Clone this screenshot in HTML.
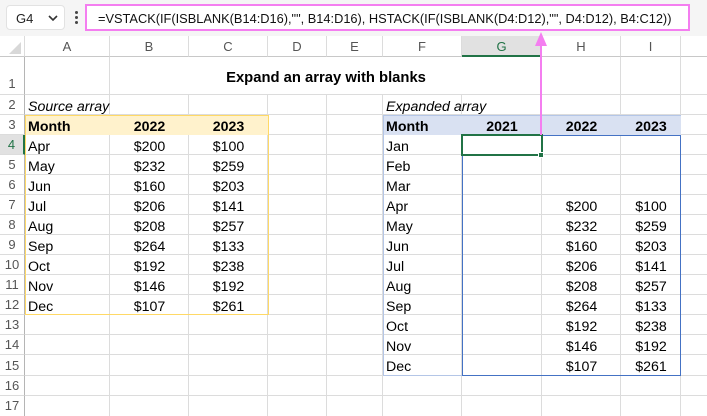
<!DOCTYPE html>
<html><head><meta charset="utf-8"><style>
*{margin:0;padding:0;box-sizing:border-box}
html{width:707px;height:416px;overflow:hidden}
body{width:707px;height:416px;overflow:hidden;background:#fff;font-family:"Liberation Sans",sans-serif;position:relative}
.abs{position:absolute}
.top{left:0;top:0;width:707px;height:36px;background:#f5f5f5}
.nb{left:6px;top:5px;width:59px;height:25px;background:#fff;border:1px solid #e2e2e2;border-radius:4px;font-size:13px;color:#222;padding:5px 0 0 9px}
.fb{left:85px;top:4px;width:605px;height:27px;background:#fff;border:2px solid #f47ef0;font-size:12.8px;color:#111;padding:5px 0 0 11px;white-space:nowrap}
.c{position:absolute;font-size:14.2px;color:#000;white-space:nowrap;line-height:20px;margin-top:2px}
.ch{position:absolute;top:36px;height:21px;font-size:13px;color:#555;text-align:center;line-height:21px;border-right:1px solid #dcdcdc;border-bottom:1px solid #c8c8c8}
.rh{position:absolute;left:0;width:25px;font-size:13px;color:#555;text-align:center;border-bottom:1px solid #dcdcdc;border-right:1px solid #b5b5b5}
.vl{position:absolute;top:57px;width:1px;height:359px;background:#dcdcdc}
.hl{position:absolute;left:25px;width:682px;height:1px;background:#dcdcdc}
</style></head><body>
<div class="abs top"></div>
<div class="abs nb">G4<svg class="abs" style="left:41px;top:9px" width="10" height="7"><path d="M1 1 L5 5 L9 1" stroke="#333" stroke-width="1.6" fill="none"/></svg></div>
<div class="abs" style="left:75px;top:11px;width:3px;height:3px;background:#444;border-radius:2px"></div>
<div class="abs" style="left:75px;top:16px;width:3px;height:3px;background:#444;border-radius:2px"></div>
<div class="abs" style="left:75px;top:21px;width:3px;height:3px;background:#444;border-radius:2px"></div>
<div class="abs fb">=VSTACK(IF(ISBLANK(B14:D16),"", B14:D16), HSTACK(IF(ISBLANK(D4:D12),"", D4:D12), B4:C12))</div>

<div class="ch" style="left:0;width:25px;background:#fff"><svg class="abs" style="left:8px;top:5px" width="14" height="14"><path d="M13 1 L13 13 L1 13 Z" fill="#d8d8d8"/></svg></div>
<div class="ch" style="left:25px;width:85px">A</div>
<div class="ch" style="left:110px;width:79px">B</div>
<div class="ch" style="left:189px;width:79px">C</div>
<div class="ch" style="left:268px;width:59px">D</div>
<div class="ch" style="left:327px;width:56px">E</div>
<div class="ch" style="left:383px;width:79px">F</div>
<div class="ch" style="left:462px;width:80px;background:#e1e1e1;color:#217346;border-bottom:2px solid #217346">G</div>
<div class="ch" style="left:542px;width:79px">H</div>
<div class="ch" style="left:621px;width:60px">I</div>
<div class="ch" style="left:681px;width:26px;border-right:none"></div>

<div class="vl" style="left:109px;top:95px;height:321px"></div>
<div class="vl" style="left:188px;top:95px;height:321px"></div>
<div class="vl" style="left:267px;top:95px;height:321px"></div>
<div class="vl" style="left:326px;top:95px;height:321px"></div>
<div class="vl" style="left:382px;top:95px;height:321px"></div>
<div class="vl" style="left:461px;top:95px;height:321px"></div>
<div class="vl" style="left:541px;top:95px;height:321px"></div>
<div class="vl" style="left:620px;top:95px;height:321px"></div>
<div class="vl" style="left:680px"></div>
<div class="vl" style="left:109px;height:38px"></div>
<div class="vl" style="left:541px;height:38px"></div>
<div class="vl" style="left:620px;height:38px"></div>
<div class="hl" style="top:94px"></div>
<div class="hl" style="top:114px"></div><div class="hl" style="top:134px"></div>
<div class="hl" style="top:154px"></div><div class="hl" style="top:174px"></div>
<div class="hl" style="top:194px"></div><div class="hl" style="top:214px"></div>
<div class="hl" style="top:234px"></div><div class="hl" style="top:254px"></div>
<div class="hl" style="top:274px"></div><div class="hl" style="top:294px"></div>
<div class="hl" style="top:314px"></div><div class="hl" style="top:334px"></div>
<div class="hl" style="top:354px"></div><div class="hl" style="top:375px"></div>
<div class="hl" style="top:395px"></div>

<div class="rh" style="top:57px;height:38px;padding-top:19px">1</div>
<div class="rh" style="top:95px;height:20px;line-height:20px">2</div>
<div class="rh" style="top:115px;height:20px;line-height:20px">3</div>
<div class="rh" style="top:135px;height:20px;line-height:20px;background:#e1e1e1;color:#217346;border-right:2px solid #217346">4</div>
<div class="rh" style="top:155px;height:20px;line-height:20px">5</div>
<div class="rh" style="top:175px;height:20px;line-height:20px">6</div>
<div class="rh" style="top:195px;height:20px;line-height:20px">7</div>
<div class="rh" style="top:215px;height:20px;line-height:20px">8</div>
<div class="rh" style="top:235px;height:20px;line-height:20px">9</div>
<div class="rh" style="top:255px;height:20px;line-height:20px">10</div>
<div class="rh" style="top:275px;height:20px;line-height:20px">11</div>
<div class="rh" style="top:295px;height:20px;line-height:20px">12</div>
<div class="rh" style="top:315px;height:20px;line-height:20px">13</div>
<div class="rh" style="top:335px;height:20px;line-height:20px">14</div>
<div class="rh" style="top:355px;height:21px;line-height:21px">15</div>
<div class="rh" style="top:376px;height:20px;line-height:20px">16</div>
<div class="rh" style="top:396px;height:20px;line-height:20px;border-bottom:none">17</div>

<div class="abs" style="left:25px;top:115px;width:243px;height:20px;background:#fff2cc"></div>
<div class="abs" style="left:25px;top:115px;width:244px;height:200px;border:1px solid #ffd966"></div>
<div class="abs" style="left:383px;top:115px;width:298px;height:20px;background:#d9e1f2"></div>
<div class="abs" style="left:383px;top:115px;width:298px;height:261px;border-left:1px solid #b4c6e7;border-top:1px solid #b4c6e7;border-bottom:1px solid #b4c6e7"></div>
<div class="abs" style="left:462px;top:135px;width:219px;height:241px;border:1.5px solid #4472c4"></div>

<div class="c" style="left:110px;width:432px;top:66px;text-align:center;font-weight:bold;font-size:14.8px">Expand an array with blanks</div>
<div class="c" style="left:28px;top:95px;font-style:italic">Source array</div>
<div class="c" style="left:386px;top:95px;font-style:italic">Expanded array</div>
<div class="c" style="left:28px;top:115px;font-weight:bold">Month</div>
<div class="c" style="left:110px;width:79px;top:115px;text-align:center;font-weight:bold">2022</div>
<div class="c" style="left:189px;width:79px;top:115px;text-align:center;font-weight:bold">2023</div>
<div class="c" style="left:386px;top:115px;font-weight:bold">Month</div>
<div class="c" style="left:462px;width:80px;top:115px;text-align:center;font-weight:bold">2021</div>
<div class="c" style="left:542px;width:79px;top:115px;text-align:center;font-weight:bold">2022</div>
<div class="c" style="left:621px;width:60px;top:115px;text-align:center;font-weight:bold">2023</div>

<div id="L"></div>
<script>
var src=[["Apr","$200","$100"],["May","$232","$259"],["Jun","$160","$203"],["Jul","$206","$141"],["Aug","$208","$257"],["Sep","$264","$133"],["Oct","$192","$238"],["Nov","$146","$192"],["Dec","$107","$261"]];
var h="";
src.forEach(function(r,i){var t=135+i*20;
h+='<div class="c" style="left:28px;top:'+t+'px">'+r[0]+'</div>';
h+='<div class="c" style="left:110px;width:79px;text-align:center;top:'+t+'px">'+r[1]+'</div>';
h+='<div class="c" style="left:189px;width:79px;text-align:center;top:'+t+'px">'+r[2]+'</div>';});
["Jan","Feb","Mar"].forEach(function(m,i){h+='<div class="c" style="left:386px;top:'+(135+i*20)+'px">'+m+'</div>';});
src.forEach(function(r,i){var t=195+i*20;
h+='<div class="c" style="left:386px;top:'+t+'px">'+r[0]+'</div>';
h+='<div class="c" style="left:542px;width:79px;text-align:center;top:'+t+'px">'+r[1]+'</div>';
h+='<div class="c" style="left:621px;width:60px;text-align:center;top:'+t+'px">'+r[2]+'</div>';});
document.getElementById("L").innerHTML=h;
</script>

<div class="abs" style="left:461px;top:134px;width:82px;height:22px;border:2px solid #217346"></div>
<div class="abs" style="left:538px;top:152px;width:6px;height:6px;background:#217346;border:1px solid #fff"></div>
<div class="abs" style="left:540px;top:44px;width:2px;height:91px;background:#f47ef0"></div>
<svg class="abs" style="left:535px;top:32px" width="12" height="14"><path d="M6 0 L12 14 L0 14 Z" fill="#f47ef0"/></svg>
</body></html>
